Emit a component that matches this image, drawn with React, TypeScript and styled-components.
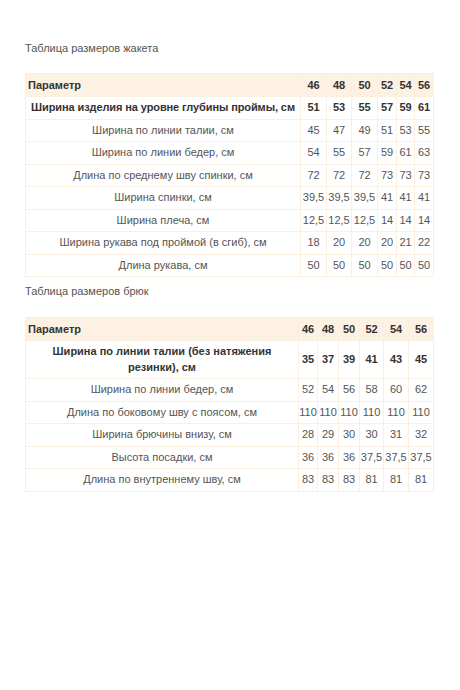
import React from 'react';
import styled, { createGlobalStyle } from 'styled-components';

const GlobalStyle = createGlobalStyle`
  html, body {
    margin: 0;
    padding: 0;
    background: #ffffff;
  }
  body {
    font-family: "Liberation Sans", Arial, sans-serif;
  }
`;

type Row = {
  name: string;
  values: string[];
  bold?: boolean;
  nowrap?: boolean;
};

const jacketSizes = ['46', '48', '50', '52', '54', '56'];
const jacketCols = [275, 26, 25, 26, 19, 18, 19];
const jacketRows: Row[] = [
  { name: 'Ширина изделия на уровне глубины проймы, см', values: ['51', '53', '55', '57', '59', '61'], bold: true, nowrap: true },
  { name: 'Ширина по линии талии, см', values: ['45', '47', '49', '51', '53', '55'] },
  { name: 'Ширина по линии бедер, см', values: ['54', '55', '57', '59', '61', '63'] },
  { name: 'Длина по среднему шву спинки, см', values: ['72', '72', '72', '73', '73', '73'] },
  { name: 'Ширина спинки, см', values: ['39,5', '39,5', '39,5', '41', '41', '41'] },
  { name: 'Ширина плеча, см', values: ['12,5', '12,5', '12,5', '14', '14', '14'] },
  { name: 'Ширина рукава под проймой (в сгиб), см', values: ['18', '20', '20', '20', '21', '22'] },
  { name: 'Длина рукава, см', values: ['50', '50', '50', '50', '50', '50'] },
];

const trouserSizes = ['46', '48', '50', '52', '54', '56'];
const trouserCols = [273, 19, 21, 21, 24, 25, 25];
const trouserRows: Row[] = [
  { name: 'Ширина по линии талии (без натяжения резинки), см', values: ['35', '37', '39', '41', '43', '45'], bold: true },
  { name: 'Ширина по линии бедер, см', values: ['52', '54', '56', '58', '60', '62'] },
  { name: 'Длина по боковому шву с поясом, см', values: ['110', '110', '110', '110', '110', '110'] },
  { name: 'Ширина брючины внизу, см', values: ['28', '29', '30', '30', '31', '32'] },
  { name: 'Высота посадки, см', values: ['36', '36', '36', '37,5', '37,5', '37,5'] },
  { name: 'Длина по внутреннему шву, см', values: ['83', '83', '83', '81', '81', '81'] },
];

const SizeTable = ({ sizes, cols, rows }: { sizes: string[]; cols: number[]; rows: Row[] }) => (
  <Table>
    <colgroup>
      {cols.map((w, i) => (
        <col key={i} style={{ width: w }} />
      ))}
    </colgroup>
    <thead>
      <tr>
        <HeadCell $left>Параметр</HeadCell>
        {sizes.map((s) => (
          <HeadCell key={s}>{s}</HeadCell>
        ))}
      </tr>
    </thead>
    <tbody>
      {rows.map((r) => (
        <tr key={r.name}>
          <NameCell $bold={r.bold} $nowrap={r.nowrap}>{r.name}</NameCell>
          {r.values.map((v, i) => (
            <Cell key={i} $bold={r.bold}>{v}</Cell>
          ))}
        </tr>
      ))}
    </tbody>
  </Table>
);

const App = () => {
  return (
    <>
      <GlobalStyle />
      <Page>
        <Title>Таблица размеров жакета</Title>
        <SizeTable sizes={jacketSizes} cols={jacketCols} rows={jacketRows} />
        <Title $tight>Таблица размеров брюк</Title>
        <SizeTable sizes={trouserSizes} cols={trouserCols} rows={trouserRows} />
      </Page>
    </>
  );
};

const Page = styled.div`
  width: 408px;
  padding: 40px 0 0 25px;
  display: flex;
  flex-direction: column;
`;

const Title = styled.div<{ $tight?: boolean }>`
  font-size: 11px;
  line-height: 16px;
  color: #555555;
  margin: ${(p) => (p.$tight ? '6px 0 18px' : '0 0 17px')};
`;

const Table = styled.table`
  width: 408px;
  table-layout: fixed;
  border-collapse: collapse;
  border: 1px solid #fbf0df;
  font-size: 11px;
`;

const HeadCell = styled.th<{ $left?: boolean }>`
  background: #fcf1e2;
  color: #333333;
  font-weight: bold;
  text-align: ${(p) => (p.$left ? 'left' : 'center')};
  padding: 3px 0 3px ${(p) => (p.$left ? '2px' : '0')};
  line-height: 16px;
  white-space: nowrap;
  border: 1px solid #fbf0df;
`;

const Cell = styled.td<{ $bold?: boolean }>`
  color: ${(p) => (p.$bold ? '#333333' : '#555555')};
  font-weight: ${(p) => (p.$bold ? 'bold' : 'normal')};
  text-align: center;
  padding: 3px 0;
  line-height: 15.5px;
  white-space: nowrap;
  border: 1px solid #fbf0df;
`;

const NameCell = styled(Cell)<{ $nowrap?: boolean }>`
  padding: 3px 4px;
  white-space: ${(p) => (p.$nowrap ? 'nowrap' : 'normal')};
  letter-spacing: ${(p) => (p.$nowrap ? '-0.1px' : 'normal')};
  overflow: visible;
`;

export default App;
